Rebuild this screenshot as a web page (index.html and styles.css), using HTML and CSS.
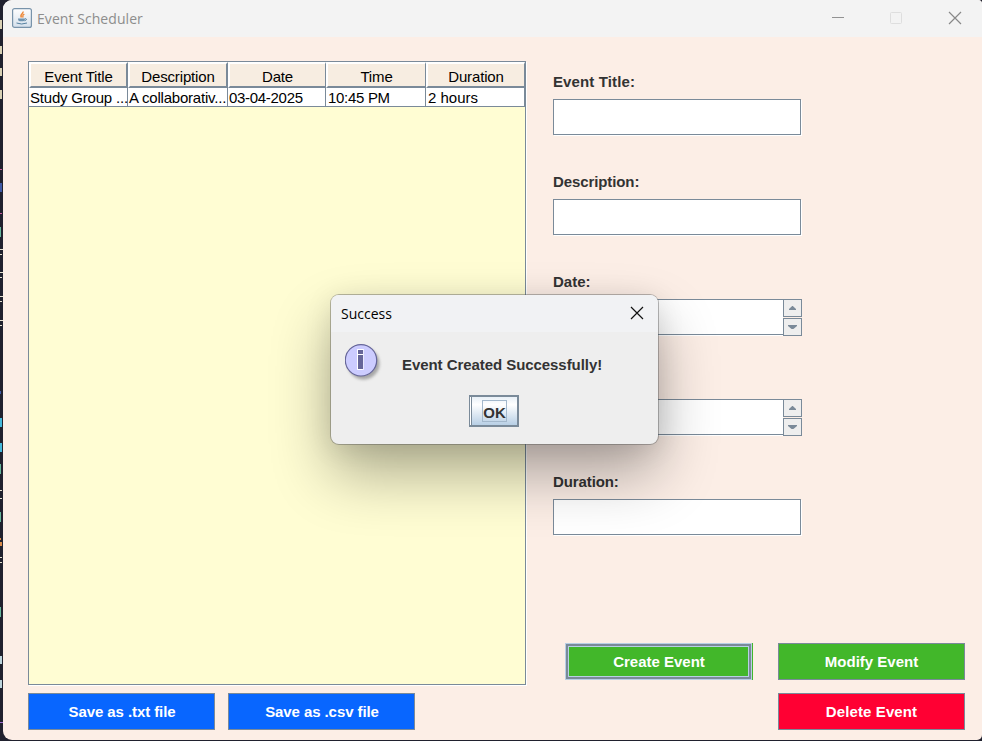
FILE: index.html
```html
<!DOCTYPE html>
<html lang="en">
<head>
<meta charset="utf-8">
<title>Event Scheduler</title>
<link rel="stylesheet" href="styles.css">
</head>
<body>
<svg class="edge" width="3" height="741" shape-rendering="crispEdges" aria-hidden="true">
  <g fill="#d8d0b4"><path d="M0 20h2v9h-2zM0 46h2v8h-2zM0 68h2v8h-2zM0 90h2v9h-2z"/></g>
  <g fill="#e4e0d0"><path d="M0 249h3v1h-3zM0 254h2v1h-2zM0 272h3v1h-3zM0 277h2v1h-2zM0 296h3v1h-3zM0 301h2v1h-2zM0 320h3v1h-3zM0 325h2v1h-2zM0 490h2v1h-2zM0 498h2v1h-2zM0 557h2v1h-2zM0 562h2v1h-2z"/></g>
  <g fill="#c65a9b"><path d="M0 169h2v1h-2zM0 213h2v1h-2z"/></g>
  <g fill="#405aa6"><path d="M0 183h2v9h-2zM0 391h1v3h-1z"/></g>
  <g fill="#65b59a"><path d="M0 227h1v10h-1zM0 464h1v10h-1zM0 512h1v10h-1zM0 607h1v10h-1z"/></g>
  <g fill="#45b9dc"><path d="M0 418h2v9h-2zM0 443h2v9h-2z"/></g>
  <g fill="#d88a4a"><path d="M0 538h1v2h-1zM0 542h2v4h-2z"/></g>
  <g fill="#bcd4dc"><path d="M0 656h2v8h-2zM0 680h2v8h-2z"/></g>
  <path fill="#a070d0" d="M0 722h3v1h-3z"/>
</svg>
<div class="window">
  <header class="titlebar">
    <svg class="app-icon" width="20" height="20" viewBox="0 0 20 20">
      <defs><linearGradient id="tile" x2="0" y2="1"><stop stop-color="#fff"/><stop offset="1" stop-color="#d5e0eb"/></linearGradient></defs>
      <rect x=".6" y=".6" width="18.8" height="18.8" rx="2" fill="url(#tile)" stroke="#7893aa" stroke-width="1.2"/>
      <path d="M10.800 3.500c1.500 2-3.800 3-1.300 6M12.300 6c-2 1.500-2 2-1 3.500" fill="none" stroke="#ee8a3b" stroke-width="1.500"/>
      <path d="M6 10.500h7c0 1.500-.5 2.800-2 2.800h-3c-1.500 0-2-1.300-2-2.800z" fill="#6f94b0"/>
      <path d="M13 10.800c2-.5 2 1.500-.5 2M4.500 15q5 2 10.500 0" fill="none" stroke="#55809f"/>
    </svg>
    <span class="app-title">Event Scheduler</span>
    <svg class="controls" width="132" height="20" viewBox="0 0 132 20" fill="none">
      <path d="M2 9.500h12" stroke="#929292"/>
      <rect x="60.500" y="4.500" width="11" height="11" rx="1" stroke="#dedede"/>
      <path d="M119 4l12 12M131 4l-12 12" stroke="#888" stroke-width="1.200"/>
    </svg>
  </header>
  <main class="content">
    <section class="left">
      <div class="table-pane">
        <table>
          <colgroup><col class="c1"><col class="c2"><col class="c3"><col class="c4"><col class="c5"></colgroup>
          <thead><tr><th>Event Title</th><th>Description</th><th>Date</th><th>Time</th><th>Duration</th></tr></thead>
          <tbody><tr><td>Study Group ...</td><td>A collaborativ...</td><td class="tight">03-04-2025</td><td class="tight">10:45 PM</td><td class="last">2 hours</td></tr></tbody>
        </table>
      </div>
      <div class="save-row">
        <button class="btn blue">Save as .txt file</button>
        <button class="btn blue">Save as .csv file</button>
      </div>
    </section>
    <section class="right">
      <form class="fields">
        <label class="field"><span class="wide">Event Title:</span><input class="box"></label>
        <label class="field"><span class="narrow">Description:</span><input class="box"></label>
        <div class="field"><span>Date:</span><div class="spinner"><span class="value"></span><span class="arrows"><i class="up"></i><i class="down"></i></span></div></div>
        <div class="field"><span>Time:</span><div class="spinner"><span class="value"></span><span class="arrows"><i class="up"></i><i class="down"></i></span></div></div>
        <label class="field"><span class="narrow">Duration:</span><input class="box"></label>
      </form>
      <div class="actions">
        <button class="btn green focused">Create Event</button>
        <button class="btn green">Modify Event</button>
        <button class="btn red wide">Delete Event</button>
      </div>
    </section>
  </main>
</div>
<div class="dialog" role="dialog">
  <header class="dialog-title">
    <span class="dialog-name">Success</span>
    <svg width="14" height="14" viewBox="0 0 14 14"><path d="M1 1l12 12M13 1L1 13" stroke="#111" stroke-width="1.200"/></svg>
  </header>
  <div class="message">
    <svg class="info" width="40" height="40" viewBox="0 0 40 40">
      <defs><filter id="soft" x="-20%" y="-20%" width="150%" height="150%"><feGaussianBlur stdDeviation="1.500"/></filter></defs>
      <circle cx="18.500" cy="19.500" r="16" fill="#777" opacity=".6" filter="url(#soft)"/>
      <circle cx="16" cy="16.300" r="15.700" fill="#ccccff" stroke="#666699" stroke-width="1.200"/>
      <path d="M12 5h7v21h-7z" fill="#fff" opacity=".6"/>
      <path d="M13 6h5v4h-5zM13 11h5v14h-5z" fill="#666699"/>
      <path d="M12.500 5.500v20h5M12.500 5.500h6M13 10.500h5" fill="none" stroke="#fff"/>
    </svg>
    <span class="message-text">Event Created Successfully!</span>
  </div>
  <button class="ok"><span class="ok-text">OK</span></button>
</div>
</body>
</html>
```
FILE: styles.css
```css
* { box-sizing: border-box; }
body {
  margin: 0;
  width: 982px;
  height: 741px;
  overflow: hidden;
  background: #20212e;
  font: 15px/20px "Liberation Sans", Arial, sans-serif;
  color: #333;
}
button, input { font: inherit; margin: 0; padding: 0; border-radius: 0; }
.edge { position: absolute; left: 0; top: 0; }
.window {
  position: relative;
  margin-left: 3px;
  height: 740px;
  background: #fceee6;
  border-radius: 9px 4px 5px 9px;
  overflow: hidden;
}
.titlebar {
  height: 37px;
  background: #f3f3f3;
  display: flex;
  align-items: center;
  padding: 0 20px 2px 9px;
}
.app-icon { margin-right: 5px; }
.app-title, .dialog-name { font-family: "Open Sans", "Noto Sans", sans-serif; font-size: 14px; }
.app-title { color: #8d8d8d; width: 107px; padding-top: 2px; letter-spacing: .06px; white-space: nowrap; }
.controls { margin-left: auto; }
.content { display: flex; padding: 24px 17px 10px 25px; height: 703px; }
.left { width: 498px; display: flex; flex-direction: column; gap: 8px; }
.table-pane {
  height: 624px;
  background: #fffdd3;
  border: 1px solid #7a8a99;
  box-shadow: 1px 1px #fff;
}
table { width: 496px; table-layout: fixed; border-collapse: separate; border-spacing: 0; color: #000; letter-spacing: -.2px; }
.c1 { width: 99px; }
.c2 { width: 100px; }
.c3 { width: 98px; }
.c4 { width: 100px; }
.c5 { width: 99px; }
th {
  height: 26px;
  padding: 4px 0 0;
  font-weight: normal;
  line-height: 18px;
  letter-spacing: -.15px;
  background: #f7ede1;
  border-top: 2px solid #fff;
  border-left: 2px solid #fff;
  border-right: 1px solid #7a8a99;
  border-bottom: 2px solid #7a8a99;
}
td {
  height: 19px;
  padding: 1px 0 0 1px;
  line-height: 17px;
  background: #fff;
  border-right: 1px solid #7a8a99;
  border-bottom: 1px solid #7a8a99;
  white-space: nowrap;
}
td.tight { letter-spacing: -.3px; }
td.tight + td { padding-left: 2px; }
td.last { letter-spacing: 0; }
th:nth-child(-n+2) { border-right-width: 2px; }
.save-row { display: flex; gap: 13px; }
.btn {
  width: 187px;
  height: 37px;
  border: 1px solid #7a8a99;
  color: #fff;
  font-weight: bold;
}
.blue { background: #0866ff; letter-spacing: -.08px; padding-left: 1px; }
.green { background: #42b72a; }
.red { background: #ff0033; }
.wide { letter-spacing: .12px; }
.narrow { letter-spacing: -.1px; }
.focused {
  width: 187px;
  padding-left: 1px;
  border: 1px solid #b8cfe5;
  box-shadow: 1px 0 #42b72a, inset 0 0 0 2px #7a8a99, inset 0 0 0 3px #b8cfe5;
}
.right { display: flex; flex-direction: column; justify-content: space-between; width: 439px; padding-left: 27px; }
.fields { padding-top: 11px; display: flex; flex-direction: column; gap: 37px; font-weight: bold; }
.field { display: flex; flex-direction: column; gap: 7px; width: 249px; }
.box { width: 248px; height: 36px; border: 1px solid #7a8a99; background: #fff; box-shadow: 1px 1px #fff; outline: 0; }
.spinner { display: flex; height: 36px; }
.value { flex: 1; background: #fff; border: 1px solid #7a8a99; border-right: 0; box-shadow: 0 1px #fff; }
.arrows { width: 19px; height: 37px; display: flex; flex-direction: column; gap: 1px; }
.arrows i { height: 18px; background: #eee; border: 1px solid #7a8a99; display: grid; place-items: center; }
.up::before, .down::before { content: ""; width: 7px; height: 4px; background: #7a8a99; }
.up::before { height: 4px; clip-path: polygon(45% 0, 55% 0, 100% 75%, 100% 100%, 0 100%, 0 75%); }
.down::before { width: 9px; clip-path: polygon(0 0, 100% 0, 100% 25%, 60% 100%, 40% 100%, 0 25%); }
.actions { display: grid; grid-template-columns: 188px 187px; gap: 13px 25px; justify-content: end; }
.actions .red { grid-column: 2; }
.dialog {
  position: absolute;
  left: 331px;
  top: 295px;
  width: 327px;
  height: 149px;
  background: #eee;
  border-radius: 8px;
  box-shadow: 0 0 0 1px rgba(80,80,80,.4), 0 30px 60px rgba(0,0,0,.32), 0 4px 28px rgba(0,0,0,.1);
}
.dialog-title {
  height: 37px;
  background: #f1f2f4;
  border-radius: 8px 8px 0 0;
  display: flex;
  justify-content: space-between;
  align-items: center;
  padding: 0 14px 1px 10px;
  color: #000;
}
.dialog-name { padding-top: 1px; }
.message { display: flex; height: 53px; padding: 12px 14px 0; }
.message-text { font-weight: bold; letter-spacing: -.06px; margin: 11px 0 0 17px; white-space: nowrap; }
.ok {
  display: block;
  width: 50px;
  height: 32px;
  margin: 10px 0 0 138px;
  border: 1px solid #7a8a99;
  border-width: 1px 2px 2px 1px;
  background: linear-gradient(#e5eef6, #fff 30%, #b8cfe5);
  box-shadow: inset 0 1px #7a8a99, inset 1px 0 #fff, inset 2px 0 #7a8a99;
  font-weight: bold;
  color: #333;
}
.ok-text { display: block; width: 25px; height: 22px; margin: 0 0 0 12px; border: 1px solid #a3b8cc; line-height: 24px; }
```
